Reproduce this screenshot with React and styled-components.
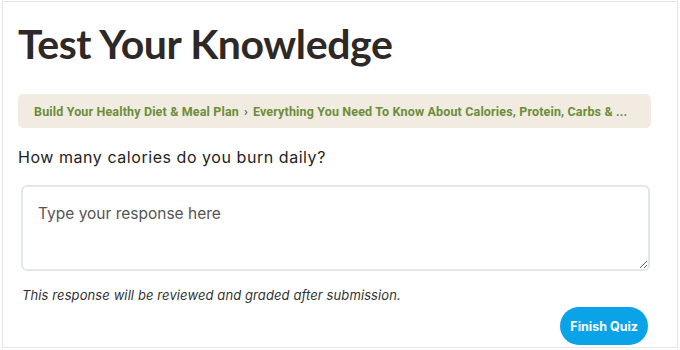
import React from "react";
import styled, { createGlobalStyle } from "styled-components";

const Global = createGlobalStyle`
  html, body { margin: 0; padding: 0; background: #fff; }
  body { font-family: "Inter", "Noto Sans", sans-serif; }
  * { box-sizing: border-box; }
`;

const Page = styled.div`
  margin: 1px 2px 0 2px;
  width: 676px;
  height: 347px;
  border: 1px solid #e6e6e6;
  padding: 15px 29px 0 15px;
  display: flex;
  flex-direction: column;
`;

const Title = styled.h1`
  margin: 0;
  font-family: "Lato", "Open Sans", sans-serif;
  font-weight: 700;
  font-size: 41px;
  line-height: 54px;
  color: #2e2826;
  letter-spacing: -0.4px;
`;

const Breadcrumb = styled.nav`
  margin-top: 23px;
  margin-right: -3px;
  height: 34px;
  background: #f1ebe1;
  border-radius: 5px;
  padding: 0 16px;
  display: flex;
  align-items: center;
  gap: 5px;
  font-family: "Roboto", "Inter", sans-serif;
  font-size: 12.5px;
  letter-spacing: 0.15px;
  font-weight: 700;
  color: #6b8e3a;
  white-space: nowrap;
  overflow: hidden;
`;

const Crumb = styled.span`
  color: #6b8e3a;
`;

const Sep = styled.span`
  color: #55603f;
  font-weight: 500;
`;

const Question = styled.p`
  margin: 17px 0 0 0;
  font-size: 16px;
  letter-spacing: 0.55px;
  line-height: 24px;
  color: #222;
`;

const Answer = styled.textarea`
  margin: 16px 0 0 3px;
  width: 629px;
  height: 86px;
  border: 2px solid #e2e6ee;
  border-radius: 6px;
  padding: 17px 15px;
  font-family: "Inter", sans-serif;
  font-size: 15.5px;
  color: #333;
  resize: vertical;
  outline: none;
  &::placeholder { color: #555; }
`;

const Note = styled.p`
  margin: 15px 0 0 4px;
  font-size: 13px;
  letter-spacing: 0.1px;
  font-style: italic;
  line-height: 18px;
  color: #333;
`;

const Actions = styled.div`
  display: flex;
  justify-content: flex-end;
  margin-top: 3px;
`;

const Finish = styled.button`
  height: 38px;
  padding: 0 10px;
  border: none;
  border-radius: 19px;
  background: #0ba3e8;
  color: #fff;
  font-family: "Inter", sans-serif;
  font-weight: 700;
  font-size: 12.5px;
  cursor: pointer;
`;

export default function App() {
  return (
    <>
      <Global />
      <Page>
        <Title>Test Your Knowledge</Title>
        <Breadcrumb>
          <Crumb>Build Your Healthy Diet &amp; Meal Plan</Crumb>
          <Sep>›</Sep>
          <Crumb>Everything You Need To Know About Calories, Protein, Carbs &amp; ...</Crumb>
        </Breadcrumb>
        <Question>How many calories do you burn daily?</Question>
        <Answer placeholder="Type your response here" />
        <Note>This response will be reviewed and graded after submission.</Note>
        <Actions>
          <Finish>Finish Quiz</Finish>
        </Actions>
      </Page>
    </>
  );
}
